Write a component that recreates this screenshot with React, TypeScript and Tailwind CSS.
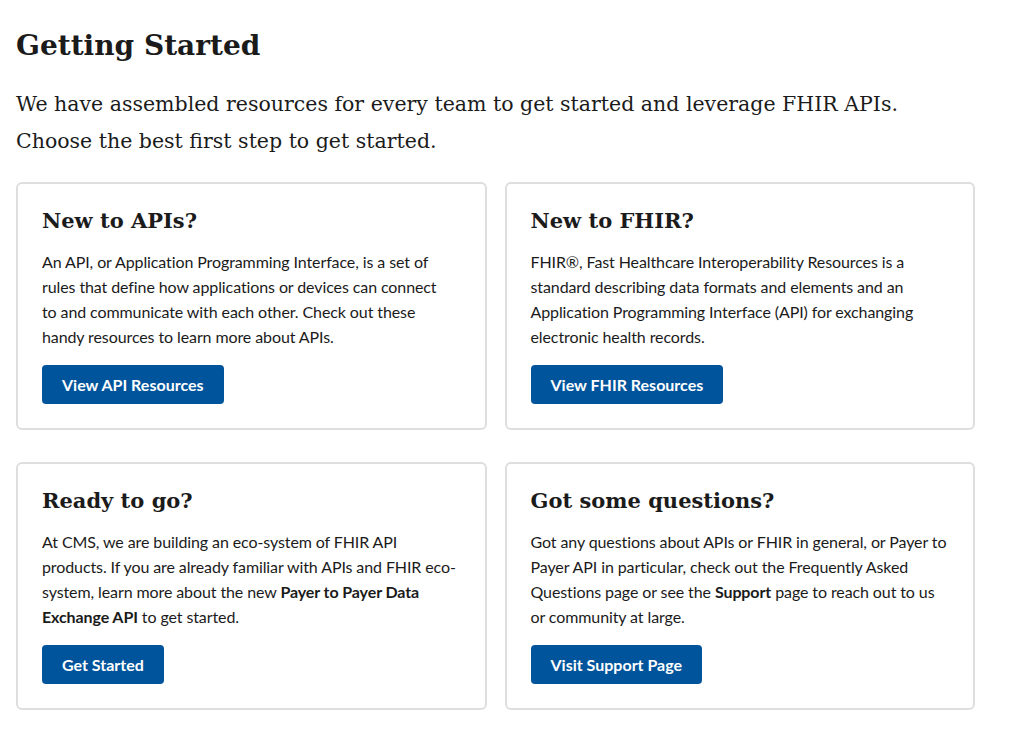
import React from "react";

const serif = "font-['DejaVu_Serif',serif]";

const CARDS = [
  {
    title: "New to APIs?",
    body: (
      <>
        An API, or Application Programming Interface, is a set of rules that define how applications or devices can
        connect
        <br />
        to and communicate with each other. Check out these handy resources to learn more about APIs.
      </>
    ),
    cta: "View API Resources",
  },
  {
    title: "New to FHIR?",
    body: (
      <>
        FHIR®, Fast Healthcare Interoperability Resources is a standard describing data formats and elements and an
        Application Programming Interface (API) for exchanging electronic health records.
      </>
    ),
    cta: "View FHIR Resources",
  },
  {
    title: "Ready to go?",
    body: (
      <>
        At CMS, we are building an eco-system of FHIR API products. If you are already familiar with APIs and FHIR
        eco-system, learn more about the new <strong className="font-bold">Payer to Payer Data Exchange API</strong> to
        get started.
      </>
    ),
    cta: "Get Started",
  },
  {
    title: "Got some questions?",
    body: (
      <>
        Got any questions about APIs or FHIR in general, or Payer to Payer API in particular, check out the Frequently
        Asked Questions page or see the <strong className="font-bold">Support</strong> page to reach out to us or
        community at large.
      </>
    ),
    cta: "Visit Support Page",
  },
];

export default function App() {
  return (
    <div className="min-h-screen bg-white text-[#1b1b1b] font-['Lato',sans-serif] px-4 pt-[26px]">
      <h1 className={`${serif} text-[28px] font-bold leading-[40px]`}>Getting Started</h1>
      <p className={`${serif} mt-[20px] text-[20.5px] leading-[37px]`}>
        We have assembled resources for every team to get started and leverage FHIR APIs.
        <br />
        Choose the best first step to get started.
      </p>

      <div className="mt-[22px] grid grid-cols-2 gap-x-[18px] gap-y-[32px] w-[959px]">
        {CARDS.map((card, index) => (
          <div key={index} className="border-2 border-[#dcdee0] rounded-md px-6 pt-[22px] pb-6 flex flex-col">
            <h2 className={`${serif} text-[21px] font-bold leading-[30px]`}>{card.title}</h2>
            <p className="mt-[13px] text-[16px] leading-[25px] tracking-[-0.1px]">{card.body}</p>
            <div className="mt-[16px]">
              <button className="h-[39px] bg-[#00549b] text-white font-bold text-[16px] leading-[20px] rounded-[4px] px-5">
                {card.cta}
              </button>
            </div>
          </div>
        ))}
      </div>
    </div>
  );
}
